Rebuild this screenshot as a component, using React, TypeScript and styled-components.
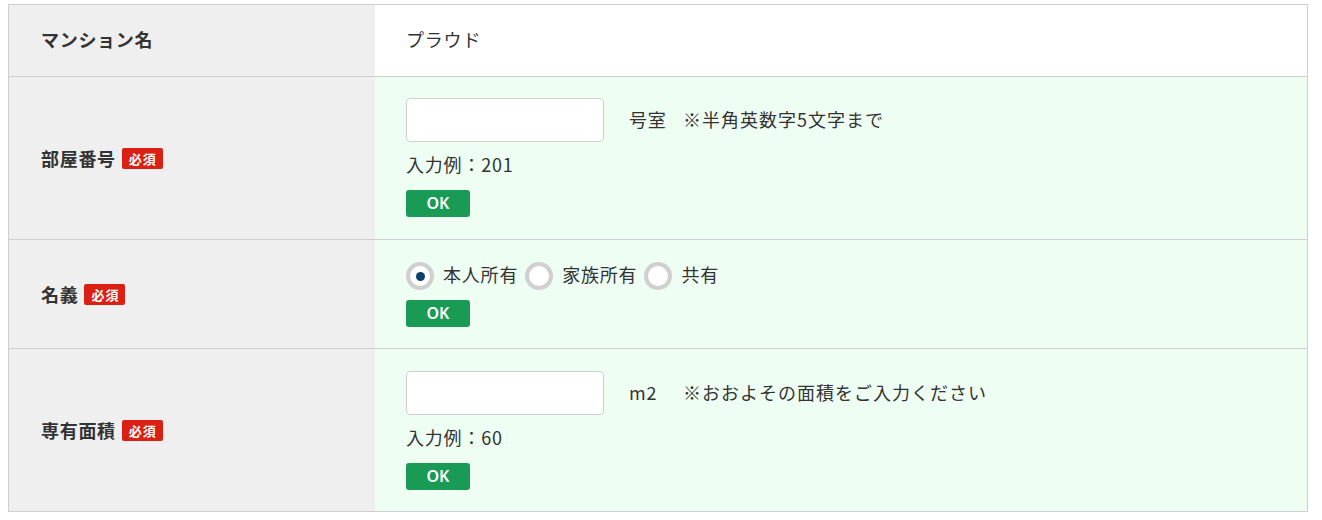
import React from "react";
import styled, { createGlobalStyle } from "styled-components";

const Global = createGlobalStyle`
  html, body { background: #fff; }
  body {
    margin: 4px 8px 0;
    font-family: "Noto Sans CJK JP", "Noto Sans", sans-serif;
    color: #333;
  }
  * { box-sizing: border-box; }
`;

const Table = styled.div`
  width: 1300px;
  border: 1px solid #cfcfcf;
  display: flex;
  flex-direction: column;
`;

const Row = styled.div`
  display: grid;
  grid-template-columns: 366px 1fr;
  border-bottom: 1px solid #cfcfcf;
  &:last-child { border-bottom: none; }
`;

const Head = styled.div<{ $lift?: number }>`
  background: #efefef;
  padding-left: 32px;
  padding-bottom: ${(p) => p.$lift ?? 0}px;
  display: flex;
  align-items: center;
  gap: 6px;
  font-size: 18px;
  font-weight: 700;
  letter-spacing: 0.7px;
  color: #333;
`;

const Badge = styled.span`
  display: inline-block;
  background: #db2013;
  color: #fff;
  font-size: 13px;
  font-weight: 700;
  line-height: 21px;
  height: 21px;
  padding: 0 6px 0 7px;
  letter-spacing: 1px;
  border-radius: 2px;
`;

const Body = styled.div<{ $plain?: boolean; $top: number; $bottom: number }>`
  background: ${(p) => (p.$plain ? "#ffffff" : "#effef3")};
  padding: ${(p) => `${p.$top}px 20px ${p.$bottom}px 31px`};
  display: flex;
  flex-direction: column;
  align-items: flex-start;
  justify-content: center;
  font-size: 18px;
  letter-spacing: 0.8px;
  min-height: ${(p) => (p.$plain ? "71px" : "auto")};
`;

const Value = styled.span`
  font-weight: 400;
`;

const InputLine = styled.div`
  display: flex;
  align-items: center;
  height: 44px;
`;

const TextInput = styled.input`
  width: 198px;
  height: 44px;
  border: 1px solid #cfcfcf;
  border-radius: 4px;
  background: #fff;
  outline: none;
  font-size: 17px;
  padding: 0 8px;
`;

const Unit = styled.span`
  width: 54px;
  margin-left: 25px;
  padding-bottom: 2px;
`;

const Note = styled.span`
  padding-bottom: 2px;
  letter-spacing: 1px;
`;

const Example = styled.div`
  margin-top: 7px;
  line-height: 30px;
  height: 30px;
`;

const OkButton = styled.button<{ $gap: number }>`
  margin-top: ${(p) => p.$gap}px;
  width: 64px;
  height: 27px;
  border: none;
  border-radius: 3px;
  background: #199b56;
  color: #fff;
  font-family: "Noto Sans", "Open Sans", sans-serif;
  font-weight: 600;
  font-size: 16px;
  line-height: 27px;
  padding: 0;
  letter-spacing: 0;
`;

const RadioGroup = styled.div`
  display: flex;
  align-items: center;
  height: 28px;
`;

const RadioItem = styled.label`
  display: flex;
  align-items: center;
  margin-right: 7px;
`;

const RadioCircle = styled.span<{ $on?: boolean }>`
  width: 28px;
  height: 28px;
  border-radius: 50%;
  border: 4px solid #d0d0d0;
  background: #fff;
  display: flex;
  align-items: center;
  justify-content: center;
  margin-right: 9px;
  &::after {
    content: "";
    width: 9px;
    height: 9px;
    border-radius: 50%;
    background: ${(p) => (p.$on ? "#0d3f6b" : "transparent")};
  }
`;

const RadioText = styled.span`
  padding-bottom: 4px;
`;

export default function App() {
  return (
    <>
      <Global />
      <Table>
        <Row>
          <Head $lift={3}>マンション名</Head>
          <Body $plain $top={0} $bottom={3}>
            <Value>プラウド</Value>
          </Body>
        </Row>
        <Row>
          <Head>
            部屋番号<Badge>必須</Badge>
          </Head>
          <Body $top={21} $bottom={22}>
            <InputLine>
              <TextInput type="text" />
              <Unit>号室</Unit>
              <Note>※半角英数字5文字まで</Note>
            </InputLine>
            <Example>入力例：201</Example>
            <OkButton $gap={11}>OK</OkButton>
          </Body>
        </Row>
        <Row>
          <Head>
            名義<Badge>必須</Badge>
          </Head>
          <Body $top={22} $bottom={21}>
            <RadioGroup>
              <RadioItem>
                <RadioCircle $on />
                <RadioText>本人所有</RadioText>
              </RadioItem>
              <RadioItem>
                <RadioCircle />
                <RadioText>家族所有</RadioText>
              </RadioItem>
              <RadioItem>
                <RadioCircle />
                <RadioText>共有</RadioText>
              </RadioItem>
            </RadioGroup>
            <OkButton $gap={10}>OK</OkButton>
          </Body>
        </Row>
        <Row>
          <Head>
            専有面積<Badge>必須</Badge>
          </Head>
          <Body $top={22} $bottom={21}>
            <InputLine>
              <TextInput type="text" />
              <Unit>m2</Unit>
              <Note>※おおよその面積をご入力ください</Note>
            </InputLine>
            <Example>入力例：60</Example>
            <OkButton $gap={11}>OK</OkButton>
          </Body>
        </Row>
      </Table>
    </>
  );
}
